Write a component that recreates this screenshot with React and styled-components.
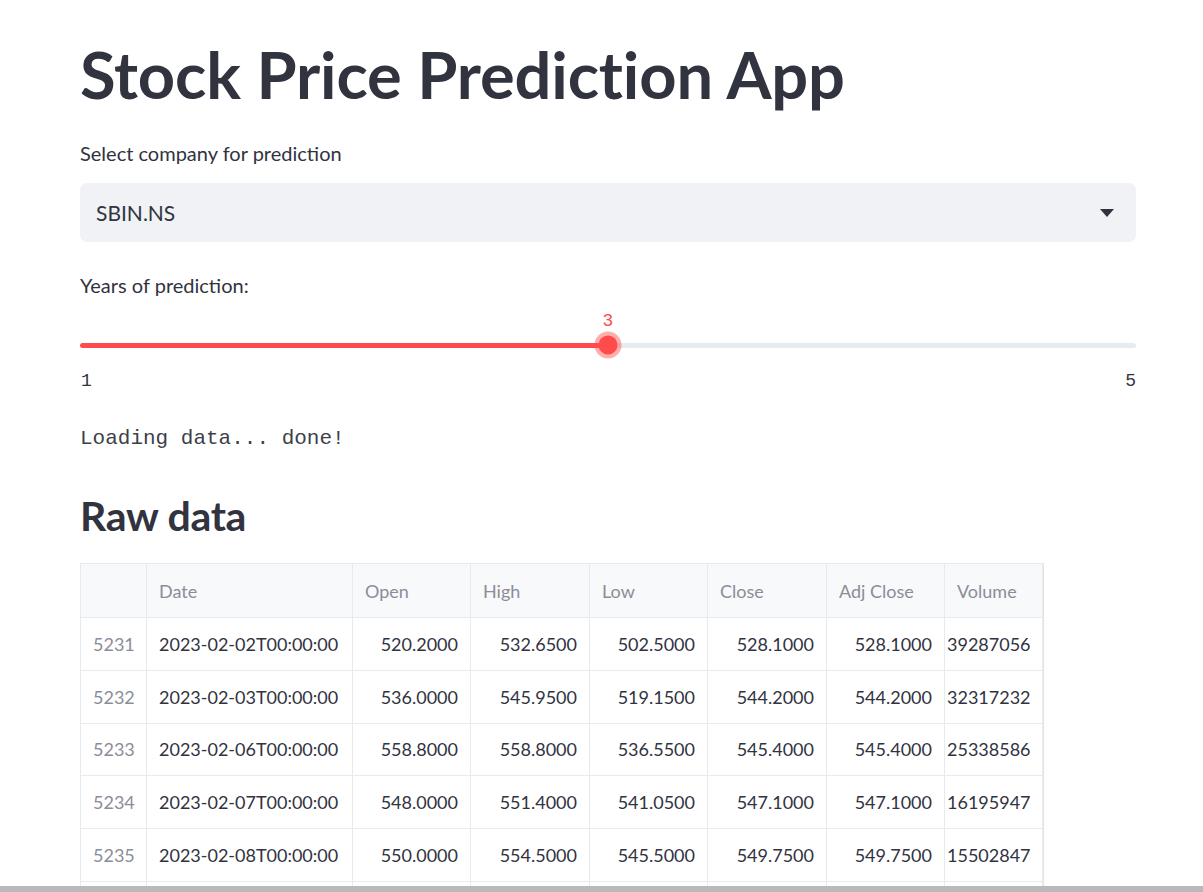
import React from 'react'
import styled, { createGlobalStyle } from 'styled-components'

const GlobalStyle = createGlobalStyle`
  html, body {
    margin: 0;
    padding: 0;
    background: #ffffff;
  }
  body {
    font-family: "Lato", "Noto Sans", sans-serif;
    color: #31333f;
  }
`

const Screen = styled.div`
  display: flex;
  flex-direction: column;
  width: 100vw;
  height: 100vh;
  overflow: hidden;
`

const Main = styled.main`
  flex: 1;
  overflow: hidden;
  padding: 36px 0 0 80px;
`

const Column = styled.div`
  display: flex;
  flex-direction: column;
  width: 1056px;
`

const ScrollBar = styled.div`
  height: 6px;
  background: #b9b9b9;
  flex-shrink: 0;
`

const Title = styled.h1`
  margin: 0;
  font-size: 65px;
  font-weight: 700;
  line-height: 77px;
  color: #31333f;
  letter-spacing: -0.15px;
`

const Label = styled.div`
  margin-top: ${(p) => p.$top}px;
  font-size: 20px;
  line-height: 24px;
  color: #31333f;
`

const Select = styled.div`
  margin-top: 18px;
  height: 59px;
  display: flex;
  align-items: center;
  justify-content: space-between;
  padding: 0 22px 0 16px;
  background: #f0f2f6;
  border-radius: 7px;
  font-size: 21px;
  color: #31333f;
`

const Slider = styled.div`
  display: flex;
  flex-direction: column;
  margin-top: 12px;
`

const ValueRow = styled.div`
  position: relative;
  height: 24px;
`

const Value = styled.span`
  position: absolute;
  left: 50%;
  top: 0;
  transform: translateX(-50%);
  font-family: "Liberation Mono", monospace;
  font-size: 18px;
  line-height: 24px;
  color: #ff4b4b;
`

const TrackRow = styled.div`
  position: relative;
  height: 24px;
  display: flex;
  align-items: center;
`

const Track = styled.div`
  width: 100%;
  height: 5px;
  border-radius: 3px;
  background: linear-gradient(to right, #ff4b4b 0 50%, #e6eaf1 50% 100%);
`

const Thumb = styled.div`
  position: absolute;
  left: 50%;
  top: 50%;
  width: 19px;
  height: 19px;
  border-radius: 50%;
  background: #ff4b4b;
  transform: translate(-50%, -50%);
  box-shadow: 0 0 0 4px rgba(255, 75, 75, 0.45);
`

const Ticks = styled.div`
  display: flex;
  justify-content: space-between;
  margin-top: 12px;
  padding: 0 0 0 1px;
  font-family: "Liberation Mono", monospace;
  font-size: 18px;
  line-height: 24px;
  color: #31333f;
`

const Mono = styled.div`
  margin-top: 34px;
  font-family: "Liberation Mono", monospace;
  font-size: 21px;
  line-height: 24px;
  color: #3d3f4a;
`

const Heading = styled.h2`
  margin: 38px 0 0;
  font-size: 41px;
  font-weight: 700;
  line-height: 54px;
  color: #31333f;
  letter-spacing: -0.3px;
`

const TableBox = styled.div`
  margin-top: 20px;
  width: 962px;
  border-right: 2px solid #e4e4e4;
`

const Table = styled.table`
  border-collapse: collapse;
  table-layout: fixed;
  width: 962px;
  font-size: 18px;
`

const Th = styled.th`
  height: 53px;
  padding: 0 12px;
  text-align: left;
  font-weight: 400;
  color: #8b8d98;
  background: #f8f9fb;
  border: 1px solid #e9eaee;
  white-space: nowrap;
  overflow: hidden;
`

const Td = styled.td`
  height: ${(p) => (p.$filler ? 20 : 51.8)}px;
  padding: 0 ${(p) => (p.$tight ? '13px 0 2px' : '12px 0 12px')};
  text-align: ${(p) => (p.$align || 'left')};
  color: ${(p) => (p.$muted ? '#8b8d98' : '#31333f')};
  border: 1px solid #e9eaee;
  white-space: nowrap;
`

const columns = [
  { label: '', width: 66 },
  { label: 'Date', width: 206 },
  { label: 'Open', width: 118 },
  { label: 'High', width: 119 },
  { label: 'Low', width: 118 },
  { label: 'Close', width: 119 },
  { label: 'Adj Close', width: 118 },
  { label: 'Volume', width: 98 },
]

const rows = [
  ['5231', '2023-02-02T00:00:00', '520.2000', '532.6500', '502.5000', '528.1000', '528.1000', '39287056'],
  ['5232', '2023-02-03T00:00:00', '536.0000', '545.9500', '519.1500', '544.2000', '544.2000', '32317232'],
  ['5233', '2023-02-06T00:00:00', '558.8000', '558.8000', '536.5500', '545.4000', '545.4000', '25338586'],
  ['5234', '2023-02-07T00:00:00', '548.0000', '551.4000', '541.0500', '547.1000', '547.1000', '16195947'],
  ['5235', '2023-02-08T00:00:00', '550.0000', '554.5000', '545.5000', '549.7500', '549.7500', '15502847'],
]

function Caret() {
  return (
    <svg width="14" height="8" viewBox="0 0 14 8">
      <path d="M0 0 H14 L7 8 Z" fill="#31333f" />
    </svg>
  )
}

export default function App() {
  return (
    <Screen>
      <GlobalStyle />
      <Main>
        <Column>
          <Title>Stock Price Prediction App</Title>
          <Label $top={28}>Select company for prediction</Label>
          <Select>
            <span>SBIN.NS</span>
            <Caret />
          </Select>
          <Label $top={31}>Years of prediction:</Label>
          <Slider>
            <ValueRow>
              <Value>3</Value>
            </ValueRow>
            <TrackRow>
              <Track />
              <Thumb />
            </TrackRow>
            <Ticks>
              <span>1</span>
              <span>5</span>
            </Ticks>
          </Slider>
          <Mono>Loading data... done!</Mono>
          <Heading>Raw data</Heading>
          <TableBox>
            <Table>
              <colgroup>
                {columns.map((c, i) => (
                  <col key={i} style={{ width: c.width }} />
                ))}
              </colgroup>
              <thead>
                <tr>
                  {columns.map((c, i) => (
                    <Th key={i}>{c.label}</Th>
                  ))}
                </tr>
              </thead>
              <tbody>
                {rows.map((r) => (
                  <tr key={r[0]}>
                    {r.map((v, i) => (
                      <Td
                        key={i}
                        $muted={i === 0}
                        $align={i >= 2 ? 'right' : 'left'}
                        $tight={i === 7}
                      >
                        {v}
                      </Td>
                    ))}
                  </tr>
                ))}
                <tr>
                  {columns.map((c, i) => (
                    <Td key={i} $filler />
                  ))}
                </tr>
              </tbody>
            </Table>
          </TableBox>
        </Column>
      </Main>
      <ScrollBar />
    </Screen>
  )
}
